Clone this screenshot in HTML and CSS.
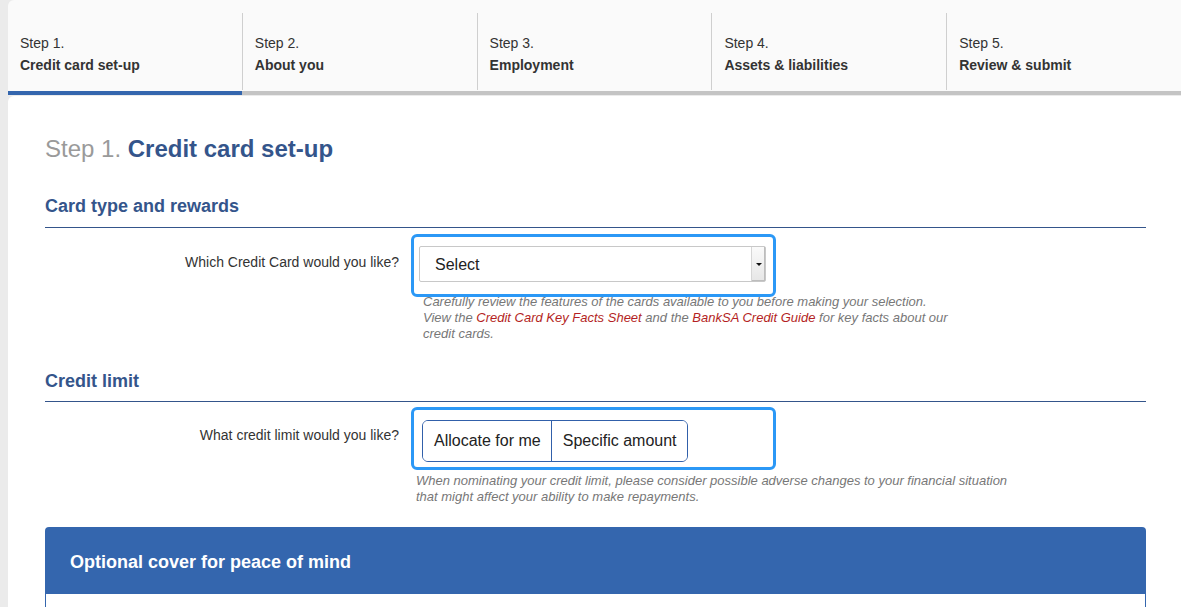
FILE: index.html
```html
<!DOCTYPE html>
<html lang="en">
<head>
<meta charset="utf-8">
<title>Credit card application</title>
<link rel="stylesheet" href="styles.css">
</head>
<body>
<div class="page">
  <nav class="steps">
    <div class="step active"><span class="num">Step 1.</span><span class="name">Credit card set-up</span></div>
    <div class="step"><span class="num">Step 2.</span><span class="name">About you</span></div>
    <div class="step"><span class="num">Step 3.</span><span class="name">Employment</span></div>
    <div class="step"><span class="num">Step 4.</span><span class="name">Assets &amp; liabilities</span></div>
    <div class="step"><span class="num">Step 5.</span><span class="name">Review &amp; submit</span></div>
  </nav>
  <main class="content">
    <h1 class="title"><span class="title-step">Step 1.</span> Credit card set-up</h1>

    <h2 class="section first">Card type and rewards</h2>
    <div class="row">
      <div class="label">Which Credit Card would you like?</div>
      <div class="field">
        <div class="focus focus-select">
          <div class="select"><span class="select-text">Select</span><span class="select-btn"><span class="caret"></span></span></div>
        </div>
        <p class="help help-1">Carefully review the features of the cards available to you before making your selection. View the <a href="#">Credit Card Key Facts Sheet</a> and the <a href="#">BankSA Credit Guide</a> for key facts about our credit cards.</p>
      </div>
    </div>

    <h2 class="section">Credit limit</h2>
    <div class="row row-2">
      <div class="label">What credit limit would you like?</div>
      <div class="field">
        <div class="focus focus-buttons">
          <div class="btn-group"><button class="btn">Allocate for me</button><button class="btn">Specific amount</button></div>
        </div>
        <p class="help help-2">When nominating your credit limit, please consider possible adverse changes to your financial situation that might affect your ability to make repayments.</p>
      </div>
    </div>

    <section class="panel">
      <div class="panel-head">Optional cover for peace of mind</div>
      <div class="panel-body"></div>
    </section>
  </main>
</div>
</body>
</html>
```

FILE: styles.css
```css
html, body {
  margin: 0;
  padding: 0;
  height: 100%;
}
body {
  background: #ebebeb;
  font-family: "Liberation Sans", Arial, sans-serif;
  color: #333;
  overflow: hidden;
}
.page {
  margin-left: 8px;
}
.steps {
  display: flex;
  background: #fafafa;
  border-top-left-radius: 6px;
  padding-bottom: 5px;
}
.step {
  flex: 1 1 0;
  margin-top: 13px;
  padding: 19px 12px 14px;
  display: flex;
  flex-direction: column;
  font-size: 14px;
  line-height: 22px;
  color: #333;
  border-left: 1px solid #cfcfcf;
  position: relative;
}
.step:first-child {
  border-left: none;
}
.step::after {
  content: "";
  position: absolute;
  left: -1px;
  right: 0;
  bottom: -5px;
  height: 4px;
  background: #c4c4c4;
}
.step:first-child::after { left: 0; }
.step.active::after {
  background: #3466ae;
}
.step .name {
  font-weight: bold;
}

.content {
  margin-top: 1px;
  background: #fff;
  border-top-left-radius: 6px;
  padding: 38px 35px 0 37px;
  min-height: 520px;
}
.title {
  margin: 0;
  font-size: 24px;
  line-height: 29px;
  font-weight: bold;
  color: #34558b;
}
.title-step {
  font-weight: normal;
  color: #9a9a9a;
}
.section {
  margin: 28px 0 0;
  padding-bottom: 9px;
  font-size: 18px;
  line-height: 22px;
  font-weight: bold;
  color: #34558b;
  border-bottom: 1px solid #34558b;
}
.section.first {
  margin-top: 32px;
  padding-bottom: 10px;
}
.row {
  display: grid;
  grid-template-columns: 354px 1fr;
  column-gap: 12px;
  margin-top: 6px;
}
.row-2 {
  margin-top: 5px;
}
.label {
  text-align: right;
  font-size: 14px;
  line-height: 20px;
  color: #333;
  padding-top: 18px;
}
.focus {
  width: 365px;
  box-sizing: border-box;
  border: 3px solid #2b98f6;
  border-radius: 6px;
}
.focus-select {
  height: 63px;
  padding: 9px 7px 0 5px;
}
.select {
  height: 36px;
  box-sizing: border-box;
  border: 1px solid #c8c8c8;
  border-radius: 2px;
  display: flex;
  align-items: stretch;
  background: #fff;
}
.select-text {
  flex: 1;
  padding-left: 15px;
  font-size: 16px;
  line-height: 35px;
  color: #222;
}
.select-btn {
  width: 13px;
  border-left: 1px solid #d6d6d6;
  background: linear-gradient(#fafafa, #e6e6e6);
  display: flex;
  align-items: center;
  justify-content: center;
  box-shadow: inset -1px -1px 0 #bdbdbd;
}
.caret {
  width: 0;
  height: 0;
  border-left: 3px solid transparent;
  border-right: 3px solid transparent;
  border-top: 3px solid #111;
}
.help {
  margin: 0;
  font-size: 13px;
  line-height: 16px;
  font-style: italic;
  color: #777;
}
.help a {
  color: #b41f24;
  text-decoration: none;
}
.help-1 {
  margin-top: -3px;
  padding-left: 12px;
  max-width: 527px;
}
.help-2 {
  margin-top: 3px;
  padding-left: 5px;
  max-width: 600px;
}
.focus-buttons {
  height: 63px;
  padding: 10px 8px 0 8px;
}
.btn-group {
  display: inline-flex;
  border: 1px solid #3160aa;
  border-radius: 6px;
  overflow: hidden;
  height: 42px;
  box-sizing: border-box;
}
.btn {
  font-family: "Liberation Sans", Arial, sans-serif;
  font-size: 16px;
  color: #222;
  background: #fff;
  border: none;
  margin: 0;
  padding: 0 10px 0 11px;
  line-height: 40px;
}
.btn + .btn {
  border-left: 1px solid #3160aa;
}
.panel {
  margin-top: 22px;
}
.panel-head {
  background: #3466ae;
  color: #fff;
  font-size: 18px;
  line-height: 22px;
  font-weight: bold;
  padding: 24px 25px 21px;
  border-radius: 4px 4px 0 0;
}
.panel-body {
  height: 60px;
  border-left: 1px solid #3466ae;
  border-right: 1px solid #3466ae;
}
```
